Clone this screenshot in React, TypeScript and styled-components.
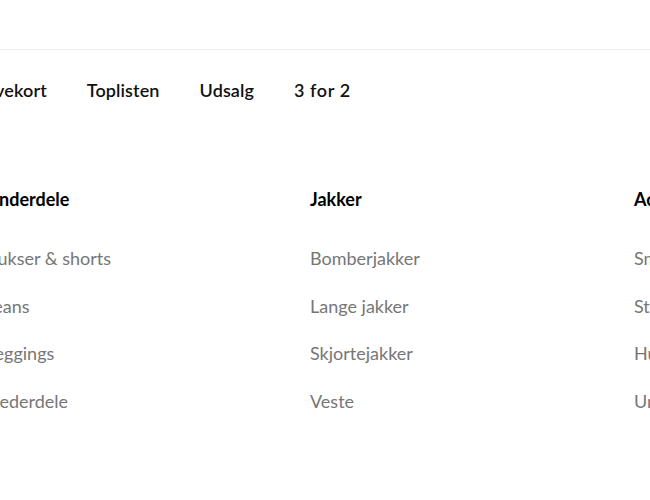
import React from "react";
import styled, { createGlobalStyle } from "styled-components";

const Global = createGlobalStyle`
  html, body {
    margin: 0;
    padding: 0;
    background: #fff;
    overflow: hidden;
  }
  body {
    font-family: Lato, "Open Sans", sans-serif;
    -webkit-font-smoothing: antialiased;
  }
`;

const Page = styled.div`
  width: 650px;
  height: 500px;
  overflow: hidden;
  position: relative;
`;

const TopBar = styled.div`
  height: 49px;
  border-bottom: 1px solid #ededed;
`;

const Inner = styled.div`
  margin-left: -14px;
  width: 1000px;
`;

const Nav = styled.nav`
  display: flex;
  gap: 40px;
  height: 80px;
  align-items: center;
  margin-left: -13px;
`;

const NavLink = styled.a<{ $wide?: boolean }>`
  font-size: 18px;
  font-weight: 600;
  color: #111;
  text-decoration: none;
  white-space: nowrap;
  letter-spacing: ${(p) => (p.$wide ? "0.6px" : "0.1px")};
`;

const Columns = styled.div`
  display: grid;
  grid-template-columns: repeat(3, 324px);
  padding-top: 56px;
`;

const Column = styled.div`
  display: flex;
  flex-direction: column;
`;

const Heading = styled.h3`
  margin: 0 0 34px;
  font-size: 18px;
  font-weight: 700;
  color: #000;
  line-height: 26px;
`;

const Item = styled.a`
  font-size: 18px;
  font-weight: 400;
  color: #767676;
  line-height: 24px;
  margin-bottom: 23.6px;
  text-decoration: none;
  white-space: nowrap;
`;

const nav = ["Gavekort", "Toplisten", "Udsalg", "3 for 2"];

const columns = [
  { title: "Underdele", items: ["Bukser & shorts", "Jeans", "Leggings", "Nederdele"] },
  { title: "Jakker", items: ["Bomberjakker", "Lange jakker", "Skjortejakker", "Veste"] },
  { title: "Accessories", items: ["Smykker", "Strømper", "Huer", "Undertøj"] },
];

export default function App() {
  return (
    <Page>
      <Global />
      <TopBar />
      <Inner>
        <Nav>
          {nav.map((n) => (
            <NavLink key={n} href="#" $wide={n === "3 for 2"}>
              {n}
            </NavLink>
          ))}
        </Nav>
        <Columns>
          {columns.map((c) => (
            <Column key={c.title}>
              <Heading>{c.title}</Heading>
              {c.items.map((i) => (
                <Item key={i} href="#">
                  {i}
                </Item>
              ))}
            </Column>
          ))}
        </Columns>
      </Inner>
    </Page>
  );
}
